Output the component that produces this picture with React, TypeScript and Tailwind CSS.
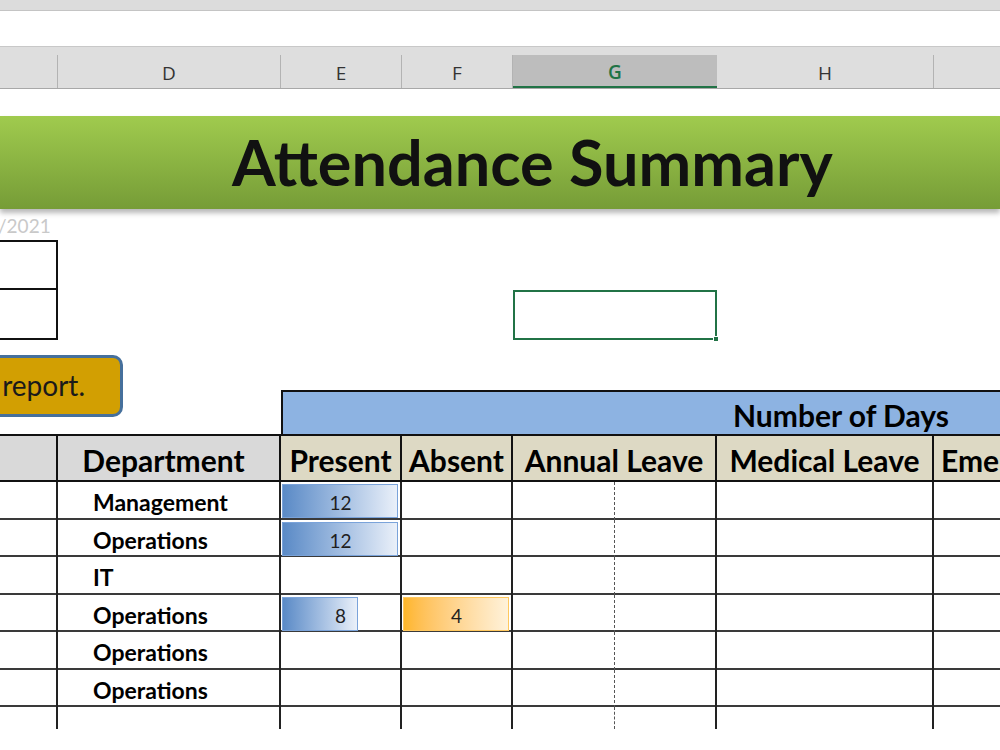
import React from "react";

// column widths C..I as seen on the zoomed sheet
const cols = "grid grid-cols-[58px_223px_121px_111px_204px_217px_66px]";

const rows = [
  { dept: "Management", present: 12, absent: 0 },
  { dept: "Operations", present: 12, absent: 0 },
  { dept: "IT", present: 0, absent: 0 },
  { dept: "Operations", present: 8, absent: 4 },
  { dept: "Operations", present: 0, absent: 0 },
  { dept: "Operations", present: 0, absent: 0 },
];

// data bars scale against the largest value of their own column
const maxPresent = Math.max(...rows.map((r) => r.present));
const maxAbsent = Math.max(...rows.map((r) => r.absent));

function DataBar({ value, max, tone }: { value: number; max: number; tone: "blue" | "orange" }) {
  if (!value) return null;
  const pct = (value / max) * 100;
  const bar =
    tone === "blue"
      ? "bg-linear-to-r from-[#5a8ac6] to-[#eaf0f9] border-[#7aa3da]"
      : "bg-linear-to-r from-[#ffb628] to-[#fff2da] border-[#ffc85e]";
  return (
    <>
      <div
        className={`absolute left-[1px] top-[2px] bottom-[2px] border ${bar}`}
        style={{ width: `calc(${pct}% - 3px)` }}
      />
      <span className="relative text-[19px] text-[#1f1f1f] pt-[5px]">{value}</span>
    </>
  );
}

export default function App() {
  return (
    <div className="relative w-[1000px] h-[750px] overflow-hidden bg-white font-['Lato',sans-serif] text-black">
      {/* ribbon / formula bar edges */}
      <div className="h-[11px] bg-[#dcdcdc] border-b border-[#c4c4c4]" />
      <div className="h-[36px] bg-white border-b border-[#c8c8c8]" />

      {/* column letters */}
      <div className="h-[42px] bg-[#dedede] border-b border-[#a8a8a8] flex flex-col font-['Open_Sans',sans-serif] text-[19px] text-[#333]">
        <div className="h-[13px]" />
        <div className={`${cols} flex-1`}>
          <div className="border-r border-[#b3b3b3]" />
          <div className="border-r border-[#b3b3b3] flex items-center justify-center pt-[3px]">D</div>
          <div className="border-r border-[#b3b3b3] flex items-center justify-center pt-[3px]">E</div>
          <div className="border-r border-[#b3b3b3] flex items-center justify-center pt-[3px]">F</div>
          <div className="bg-[#bdbdbd] border-b-2 border-[#217346] flex items-center justify-center text-[#217346] font-semibold pt-[3px]">
            G
          </div>
          <div className="border-r border-[#b3b3b3] flex items-center justify-center pt-[3px]">H</div>
          <div />
        </div>
      </div>

      <div className="h-[27px]" />

      {/* title banner */}
      <div className="relative z-10 h-[93px] bg-linear-to-b from-[#a0cb4e] to-[#769c37] shadow-[0_4px_5px_rgba(0,0,0,0.28)] flex items-center pl-[232px]">
        <h1 className="text-[63px] font-bold leading-none text-[#111] pb-[2px]">Attendance Summary</h1>
      </div>

      {/* date line */}
      <div className="h-[31px] flex items-end">
        <span className="text-[19px] leading-none text-[#c9c9c9] -ml-[2px] pb-[5px]">/2021</span>
      </div>

      {/* info boxes + selected cell */}
      <div className={`${cols} h-[50px]`}>
        <div className="border-y-2 border-r-2 border-[#111]" />
      </div>
      <div className={`${cols} h-[50px]`}>
        <div className="border-b-2 border-r-2 border-[#111]" />
        <div />
        <div />
        <div />
        <div className="relative border-2 border-[#217346]">
          <div className="absolute -right-[4px] -bottom-[4px] w-[6px] h-[6px] bg-[#217346] border border-white" />
        </div>
      </div>
      <div className="h-[50px]" />

      {/* floating button */}
      <div className="absolute left-[-12px] top-[355px] w-[135px] h-[62px] rounded-[10px] bg-[#d29f02] border-[3px] border-[#46709c] flex items-center justify-end pr-[35px]">
        <span className="text-[28px] text-[#1a1a1a] leading-none pb-[2px]">report.</span>
      </div>

      {/* table header row 1 */}
      <div className="grid grid-cols-[281px_1fr] h-[46px] border-b-2 border-[#111]">
        <div />
        <div className="bg-[#8db3e2] border-t-2 border-l-2 border-[#111] flex items-center pl-[450px]">
          <span className="text-[30px] font-bold whitespace-nowrap leading-none pt-[4px]">Number of Days</span>
        </div>
      </div>

      {/* table header row 2 */}
      <div className={`${cols} h-[46px] border-b-2 border-[#111] text-[30px] font-bold leading-none`}>
        <div className="bg-[#d9d9d9] border-r-2 border-[#111]" />
        <div className="bg-[#d9d9d9] border-r-2 border-[#111] flex items-center justify-center whitespace-nowrap overflow-hidden pr-[10px] pt-[4px]">
          Department
        </div>
        <div className="bg-[#ddd9c4] border-r-2 border-[#111] flex items-center justify-center whitespace-nowrap overflow-hidden pt-[4px]">
          Present
        </div>
        <div className="bg-[#ddd9c4] border-r-2 border-[#111] flex items-center justify-center whitespace-nowrap overflow-hidden pt-[4px]">
          Absent
        </div>
        <div className="bg-[#ddd9c4] border-r-2 border-[#111] flex items-center justify-center whitespace-nowrap overflow-hidden pt-[4px]">
          Annual Leave
        </div>
        <div className="bg-[#ddd9c4] border-r-2 border-[#111] flex items-center justify-center whitespace-nowrap overflow-hidden pt-[4px]">
          Medical Leave
        </div>
        <div className="bg-[#ddd9c4] flex items-center whitespace-nowrap overflow-hidden pl-[7px] pt-[4px]">
          Emergency Leave
        </div>
      </div>

      {/* data rows */}
      {rows.map((r, i) => (
        <div key={i} className={`${cols} ${i % 2 === 0 ? "h-[38px]" : "h-[37px]"} border-b-2 border-[#3a3a3a]`}>
          <div className="border-r-2 border-[#222]" />
          <div className="border-r-2 border-[#222] flex items-center pl-[35px] pt-[3px] text-[23px] font-bold">
            {r.dept}
          </div>
          <div className="relative border-r-2 border-[#222] flex items-center justify-center">
            <DataBar value={r.present} max={maxPresent} tone="blue" />
          </div>
          <div className="relative border-r-2 border-[#222] flex items-center justify-center">
            <DataBar value={r.absent} max={maxAbsent} tone="orange" />
          </div>
          <div className="border-r-2 border-[#222]">
            <div className="w-[102px] h-full border-r border-dashed border-[#555]" />
          </div>
          <div className="border-r-2 border-[#222]" />
          <div />
        </div>
      ))}

      {/* last partial row */}
      <div className={`${cols} h-[22px]`}>
        <div className="border-r-2 border-[#222]" />
        <div className="border-r-2 border-[#222]" />
        <div className="border-r-2 border-[#222]" />
        <div className="border-r-2 border-[#222]" />
        <div className="border-r-2 border-[#222]">
          <div className="w-[102px] h-full border-r border-dashed border-[#555]" />
        </div>
        <div className="border-r-2 border-[#222]" />
        <div />
      </div>
    </div>
  );
}
